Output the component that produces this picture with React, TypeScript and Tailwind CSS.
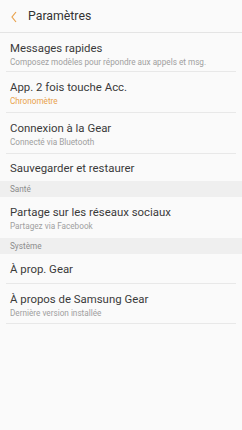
import React from "react";

type Item = { title: string; sub?: string; subOrange?: boolean };

function Row({ item, h, divider }: { item: Item; h: string; divider?: boolean }) {
  return (
    <div>
      {item.sub ? (
        <div className={`${h} pl-[10px] pt-[8px]`}>
          <div className="text-[11.4px] leading-[15px] text-[#3a3a3a]">{item.title}</div>
          <div className={`text-[8.2px] leading-[12px] ${item.subOrange ? "text-[#e9a24c]" : "text-[#a0a0a0]"}`}>{item.sub}</div>
        </div>
      ) : (
        <div className={`${h} pl-[10px] pt-[2px] flex items-center`}>
          <div className="text-[11.4px] leading-[15px] text-[#3a3a3a]">{item.title}</div>
        </div>
      )}
      {divider && <div className="mx-[6px] h-px bg-[#e8e8e8]" />}
    </div>
  );
}

function Section({ label }: { label: string }) {
  return (
    <div className="h-[16px] bg-[#efefef] pl-[10px] pt-px flex items-center text-[8.2px] text-[#8c8c8c]">{label}</div>
  );
}

export default function App() {
  return (
    <div className="w-[242px] h-[430px] bg-[#fafafa] overflow-hidden" style={{ fontFamily: "Roboto, 'Liberation Sans', sans-serif" }}>
      <div className="h-[33px] pt-px flex items-center border-b border-[#e4e4e4]">
        <svg width="6" height="12" viewBox="0 0 6 12" className="ml-[11px]">
          <polyline points="5,1 1,6 5,11" fill="none" stroke="#e9a24c" strokeWidth="1.2" />
        </svg>
        <span className="ml-[11px] text-[12.3px] text-[#333333]">Paramètres</span>
      </div>
      <Row h="h-[38px]" divider item={{ title: "Messages rapides", sub: "Composez modèles pour répondre aux appels et msg." }} />
      <Row h="h-[40px]" divider item={{ title: "App. 2 fois touche Acc.", sub: "Chronomètre", subOrange: true }} />
      <Row h="h-[40px]" divider item={{ title: "Connexion à la Gear", sub: "Connecté via Bluetooth" }} />
      <Row h="h-[27px]" item={{ title: "Sauvegarder et restaurer" }} />
      <Section label="Santé" />
      <Row h="h-[41px]" item={{ title: "Partage sur les réseaux sociaux", sub: "Partagez via Facebook" }} />
      <Section label="Système" />
      <Row h="h-[29px]" divider item={{ title: "À prop. Gear" }} />
      <Row h="h-[39px]" divider item={{ title: "À propos de Samsung Gear", sub: "Dernière version installée" }} />
    </div>
  );
}
